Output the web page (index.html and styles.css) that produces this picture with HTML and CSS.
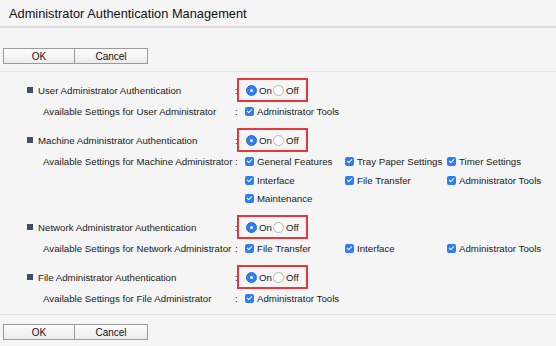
FILE: index.html
```html
<!DOCTYPE html>
<html>
<head>
<meta charset="utf-8">
<link rel="stylesheet" href="styles.css">
</head>
<body>
<div class="page">
  <div class="titlebar"><h1 class="title">Administrator Authentication Management</h1></div>
  <div class="btnbar"><button class="btn btn-ok">OK</button><button class="btn btn-cancel">Cancel</button></div>
  <div class="settings">
    <div class="section">
      <div class="row main-row">
        <div class="label"><span class="bullet"></span>User Administrator Authentication</div>
        <div class="colon">:</div>
        <div class="value"><div class="radio-box"><span class="radio on"></span><span class="rtext">On</span><span class="radio"></span><span class="rtext">Off</span></div></div>
      </div>
      <div class="row sub-row">
        <div class="label sub">Available Settings for User Administrator</div>
        <div class="colon">:</div>
        <div class="value opts"><span class="opt"><span class="check"></span>Administrator Tools</span></div>
      </div>
    </div>
    <div class="section">
      <div class="row main-row">
        <div class="label"><span class="bullet"></span>Machine Administrator Authentication</div>
        <div class="colon">:</div>
        <div class="value"><div class="radio-box"><span class="radio on"></span><span class="rtext">On</span><span class="radio"></span><span class="rtext">Off</span></div></div>
      </div>
      <div class="row sub-row">
        <div class="label sub">Available Settings for Machine Administrator</div>
        <div class="colon">:</div>
        <div class="value opts">
          <span class="opt"><span class="check"></span>General Features</span>
          <span class="opt"><span class="check"></span>Tray Paper Settings</span>
          <span class="opt"><span class="check"></span>Timer Settings</span>
          <span class="opt"><span class="check"></span>Interface</span>
          <span class="opt"><span class="check"></span>File Transfer</span>
          <span class="opt"><span class="check"></span>Administrator Tools</span>
          <span class="opt"><span class="check"></span>Maintenance</span>
        </div>
      </div>
    </div>
    <div class="section">
      <div class="row main-row">
        <div class="label"><span class="bullet"></span>Network Administrator Authentication</div>
        <div class="colon">:</div>
        <div class="value"><div class="radio-box"><span class="radio on"></span><span class="rtext">On</span><span class="radio"></span><span class="rtext">Off</span></div></div>
      </div>
      <div class="row sub-row">
        <div class="label sub">Available Settings for Network Administrator</div>
        <div class="colon">:</div>
        <div class="value opts">
          <span class="opt"><span class="check"></span>File Transfer</span>
          <span class="opt"><span class="check"></span>Interface</span>
          <span class="opt"><span class="check"></span>Administrator Tools</span>
        </div>
      </div>
    </div>
    <div class="section">
      <div class="row main-row">
        <div class="label"><span class="bullet"></span>File Administrator Authentication</div>
        <div class="colon">:</div>
        <div class="value"><div class="radio-box"><span class="radio on"></span><span class="rtext">On</span><span class="radio"></span><span class="rtext">Off</span></div></div>
      </div>
      <div class="row sub-row">
        <div class="label sub">Available Settings for File Administrator</div>
        <div class="colon">:</div>
        <div class="value opts"><span class="opt"><span class="check"></span>Administrator Tools</span></div>
      </div>
    </div>
  </div>
  <div class="btnbar bottom"><button class="btn btn-ok">OK</button><button class="btn btn-cancel">Cancel</button></div>
</div>
</body>
</html>
```
FILE: styles.css
```css
* { box-sizing: border-box; }
html, body { margin: 0; padding: 0; background: #f5f5f5; }
body { font-family: "Liberation Sans", Arial, sans-serif; font-size: 9.7px; color: #1a1a1a; }
.page { width: 556px; height: 346px; overflow: hidden; }
.titlebar { height: 28px; border-bottom: 2px solid #dcdcdc; padding-left: 9px; display: flex; align-items: center; }
.title { margin: 0; font-size: 12.8px; font-weight: normal; color: #111; }
.btnbar { display: flex; padding: 20px 0 0 3px; height: 44px; border-bottom: 1px solid #e2e2e2; }
.btnbar.bottom { border-bottom: none; border-top: 1px solid #e2e2e2; padding-top: 9px; height: auto; margin-top: 5.5px; }
.btn { height: 16px; padding: 0; font-family: inherit; font-size: 10px; color: #111; background: linear-gradient(#fdfdfd, #ececec); border: 1px solid #9a9a9a; border-radius: 0; }
.btn-ok { width: 72px; }
.btn-cancel { width: 73px; border-left: none; }
.settings { padding-top: 6px; }
.section { margin-bottom: 6.5px; }
.section:last-child { margin-bottom: 0; }
.row { display: grid; grid-template-columns: 234px 11px 1fr; }
.main-row { height: 24px; align-items: center; }
.sub-row { align-items: start; padding-top: 1px; }
.label { display: flex; align-items: center; padding-left: 27px; white-space: nowrap; }
.label.sub { padding-left: 43px; height: 17px; }
.bullet { width: 6px; height: 6px; background: #3d4d70; margin-right: 5px; }
.colon { text-align: left; height: 17px; display: flex; align-items: center; padding-left: 1px; }
.main-row .colon { height: auto; }
.radio-box { display: inline-flex; align-items: center; border: 2px solid #e8363c; height: 24px; width: 71px; padding-left: 7px; margin-left: -8px; }
.radio { width: 11px; height: 11px; border-radius: 50%; border: 1px solid #b5b5b5; background: #fff; margin-right: 2px; }
.radio.on { background: #2f7cf6; border-color: #2a6fe0; position: relative; }
.radio.on::after { content: ""; position: absolute; left: 3px; top: 3px; width: 3px; height: 3px; border-radius: 50%; background: #fff; }
.rtext { margin-right: 1px; }
.opts { display: grid; grid-template-columns: 100px 102px auto; grid-auto-rows: 18.5px; }
.opt { display: flex; align-items: center; height: 17px; white-space: nowrap; }
.check { width: 9px; height: 9px; border-radius: 2px; background: #2f7cf6; margin-right: 3px; position: relative; }
.check::after { content: ""; position: absolute; left: 3px; top: 1px; width: 2px; height: 4px; border: solid #fff; border-width: 0 1.5px 1.5px 0; transform: rotate(45deg); }
```
